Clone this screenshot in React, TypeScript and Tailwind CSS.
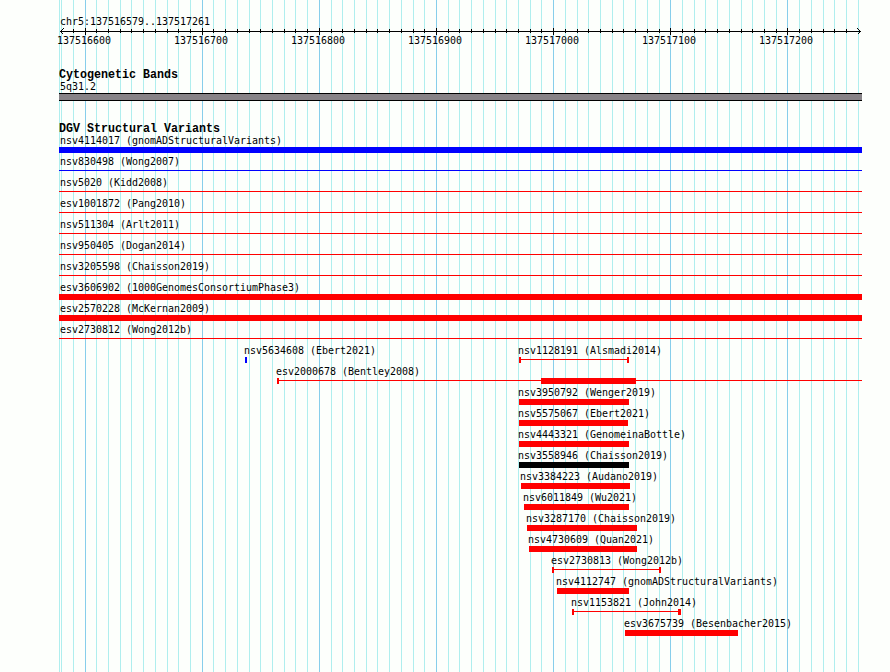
import clsx from "clsx";

type Color = "red" | "blue" | "black";
type Shape = { kind: "bar" | "line" | "range"; start: number; end: number; endCap?: number };
type Feature = { name: string; color: Color; label?: number; shapes: Shape[] };

const LEFT = 59;
const RIGHT = 862;

const MAJOR = [85, 202, 319, 436, 553, 670, 787];
const MINOR = [
  59, 61, 73, 96, 108, 120, 131, 143, 155, 167, 178, 190, 213, 225, 237, 249,
  260, 272, 284, 295, 307, 331, 342, 354, 366, 377, 389, 401, 413, 424, 448,
  459, 471, 483, 495, 506, 518, 530, 541, 565, 577, 588, 600, 612, 623, 635,
  647, 659, 682, 694, 705, 717, 729, 741, 752, 764, 776, 799, 811, 823, 834,
  846, 858,
];

const fills: Record<Color, string> = {
  red: "bg-[#ff0000]",
  blue: "bg-[#0000ff]",
  black: "bg-black",
};

const full = (name: string, color: Color, kind: "bar" | "line"): Feature[] => [
  { name, color, label: 60, shapes: [{ kind, start: LEFT, end: RIGHT }] },
];

const bar = (name: string, start: number, end: number, color: Color = "red"): Feature[] => [
  { name, color, shapes: [{ kind: "bar", start, end }] },
];

const range = (name: string, start: number, end: number, endCap = 2): Feature[] => [
  { name, color: "red", shapes: [{ kind: "range", start, end, endCap }] },
];

const rows: Feature[][] = [
  full("nsv4114017 (gnomADStructuralVariants)", "blue", "bar"),
  full("nsv830498 (Wong2007)", "blue", "line"),
  full("nsv5020 (Kidd2008)", "red", "line"),
  full("esv1001872 (Pang2010)", "red", "line"),
  full("nsv511304 (Arlt2011)", "red", "line"),
  full("nsv950405 (Dogan2014)", "red", "line"),
  full("nsv3205598 (Chaisson2019)", "red", "line"),
  full("esv3606902 (1000GenomesConsortiumPhase3)", "red", "bar"),
  full("esv2570228 (McKernan2009)", "red", "bar"),
  full("esv2730812 (Wong2012b)", "red", "line"),
  [...bar("nsv5634608 (Ebert2021)", 245, 247, "blue"), ...range("nsv1128191 (Alsmadi2014)", 519, 629)],
  [
    {
      name: "esv2000678 (Bentley2008)",
      color: "red",
      shapes: [
        { kind: "bar", start: 277, end: 279 },
        { kind: "line", start: 277, end: RIGHT },
        { kind: "bar", start: 541, end: 636 },
      ],
    },
  ],
  bar("nsv3950792 (Wenger2019)", 519, 629),
  bar("nsv5575067 (Ebert2021)", 519, 628),
  bar("nsv4443321 (GenomeinaBottle)", 519, 629),
  bar("nsv3558946 (Chaisson2019)", 519, 629, "black"),
  bar("nsv3384223 (Audano2019)", 521, 630),
  bar("nsv6011849 (Wu2021)", 524, 629),
  bar("nsv3287170 (Chaisson2019)", 527, 637),
  bar("nsv4730609 (Quan2021)", 529, 637),
  range("esv2730813 (Wong2012b)", 552, 661),
  bar("nsv4112747 (gnomADStructuralVariants)", 557, 629),
  range("nsv1153821 (John2014)", 572, 681, 3),
  bar("esv3675739 (Besenbacher2015)", 625, 738),
];

function Label({ children }: { children: string }) {
  return (
    <span className="block origin-left scale-x-[0.9061] whitespace-pre font-['DejaVu_Sans_Mono',monospace] text-[11px] leading-3">
      {children}
    </span>
  );
}

function TrackTitle({ children }: { children: string }) {
  return (
    <h2 className="ml-[59px] origin-left scale-x-[0.972] whitespace-pre font-['Liberation_Mono',monospace] text-[12px] font-bold leading-3">
      {children}
    </h2>
  );
}

function Gridlines() {
  return (
    <svg className="absolute inset-0" width="890" height="672" shapeRendering="crispEdges">
      {MINOR.map((x) => (
        <rect key={x} x={x} y="0" width="1" height="672" fill="#afeeee" />
      ))}
      {MAJOR.map((x) => (
        <rect key={x} x={x} y="0" width="1" height="672" fill="#87ceeb" />
      ))}
    </svg>
  );
}

function Ruler() {
  return (
    <div className="relative h-[18px]">
      <svg className="block" width="890" height="8" shapeRendering="crispEdges">
        <rect x="60" y="4" width="801" height="1" />
        {MINOR.slice(2, -1).map((x) => (
          <rect key={x} x={x} y="2" width="1" height="4" />
        ))}
        {MAJOR.map((x) => (
          <rect key={x} x={x} y="1" width="1" height="7" />
        ))}
        <path
          d="M63.5 1.5L60.5 4.5L63.5 7.5M857.5 1.5L860.5 4.5L857.5 7.5"
          fill="none"
          stroke="black"
        />
      </svg>
      {MAJOR.map((x, i) => (
        <div key={x} className="absolute top-2" style={{ left: x - 28 }}>
          <Label>{String(137516600 + i * 100)}</Label>
        </div>
      ))}
    </div>
  );
}

function Glyph({ shape, color }: { shape: Shape; color: Color }) {
  const { kind, start, end, endCap } = shape;
  const style = { left: start, width: end - start };
  if (kind === "range") {
    return (
      <div className="absolute top-3 flex h-1.5" style={style}>
        <div className={clsx("w-0.5", fills[color])} />
        <div className={clsx("mt-0.5 h-px flex-1", fills[color])} />
        <div className={fills[color]} style={{ width: endCap }} />
      </div>
    );
  }
  return (
    <div
      className={clsx("absolute", kind === "bar" ? "top-3 h-1.5" : "top-[14px] h-px", fills[color])}
      style={style}
    />
  );
}

function FeatureRow({ features }: { features: Feature[] }) {
  return (
    <div className="relative h-[21px]">
      {features.map((f) => (
        <div key={f.name}>
          <div className="absolute top-0" style={{ left: f.label ?? f.shapes[0].start - 1 }}>
            <Label>{f.name}</Label>
          </div>
          {f.shapes.map((s, i) => (
            <Glyph key={i} shape={s} color={f.color} />
          ))}
        </div>
      ))}
    </div>
  );
}

export default function App() {
  return (
    <div className="relative h-[672px] w-[890px] overflow-hidden bg-[#fdfffc] text-black">
      <Gridlines />
      <main className="relative flex flex-col">
        <div className="flex h-[27px] pl-[60px] pt-4">
          <Label>chr5:137516579..137517261</Label>
        </div>
        <Ruler />

        <section className="pt-6">
          <TrackTitle>Cytogenetic Bands</TrackTitle>
          <div className="flex pl-[60px]">
            <Label>5q31.2</Label>
          </div>
          <div className="ml-[59px] h-2 w-[803px] border-y border-black bg-[#878387]" />
        </section>

        <section className="pt-[22px]">
          <TrackTitle>DGV Structural Variants</TrackTitle>
          {rows.map((features) => (
            <FeatureRow key={features[0].name} features={features} />
          ))}
        </section>
      </main>
    </div>
  );
}
